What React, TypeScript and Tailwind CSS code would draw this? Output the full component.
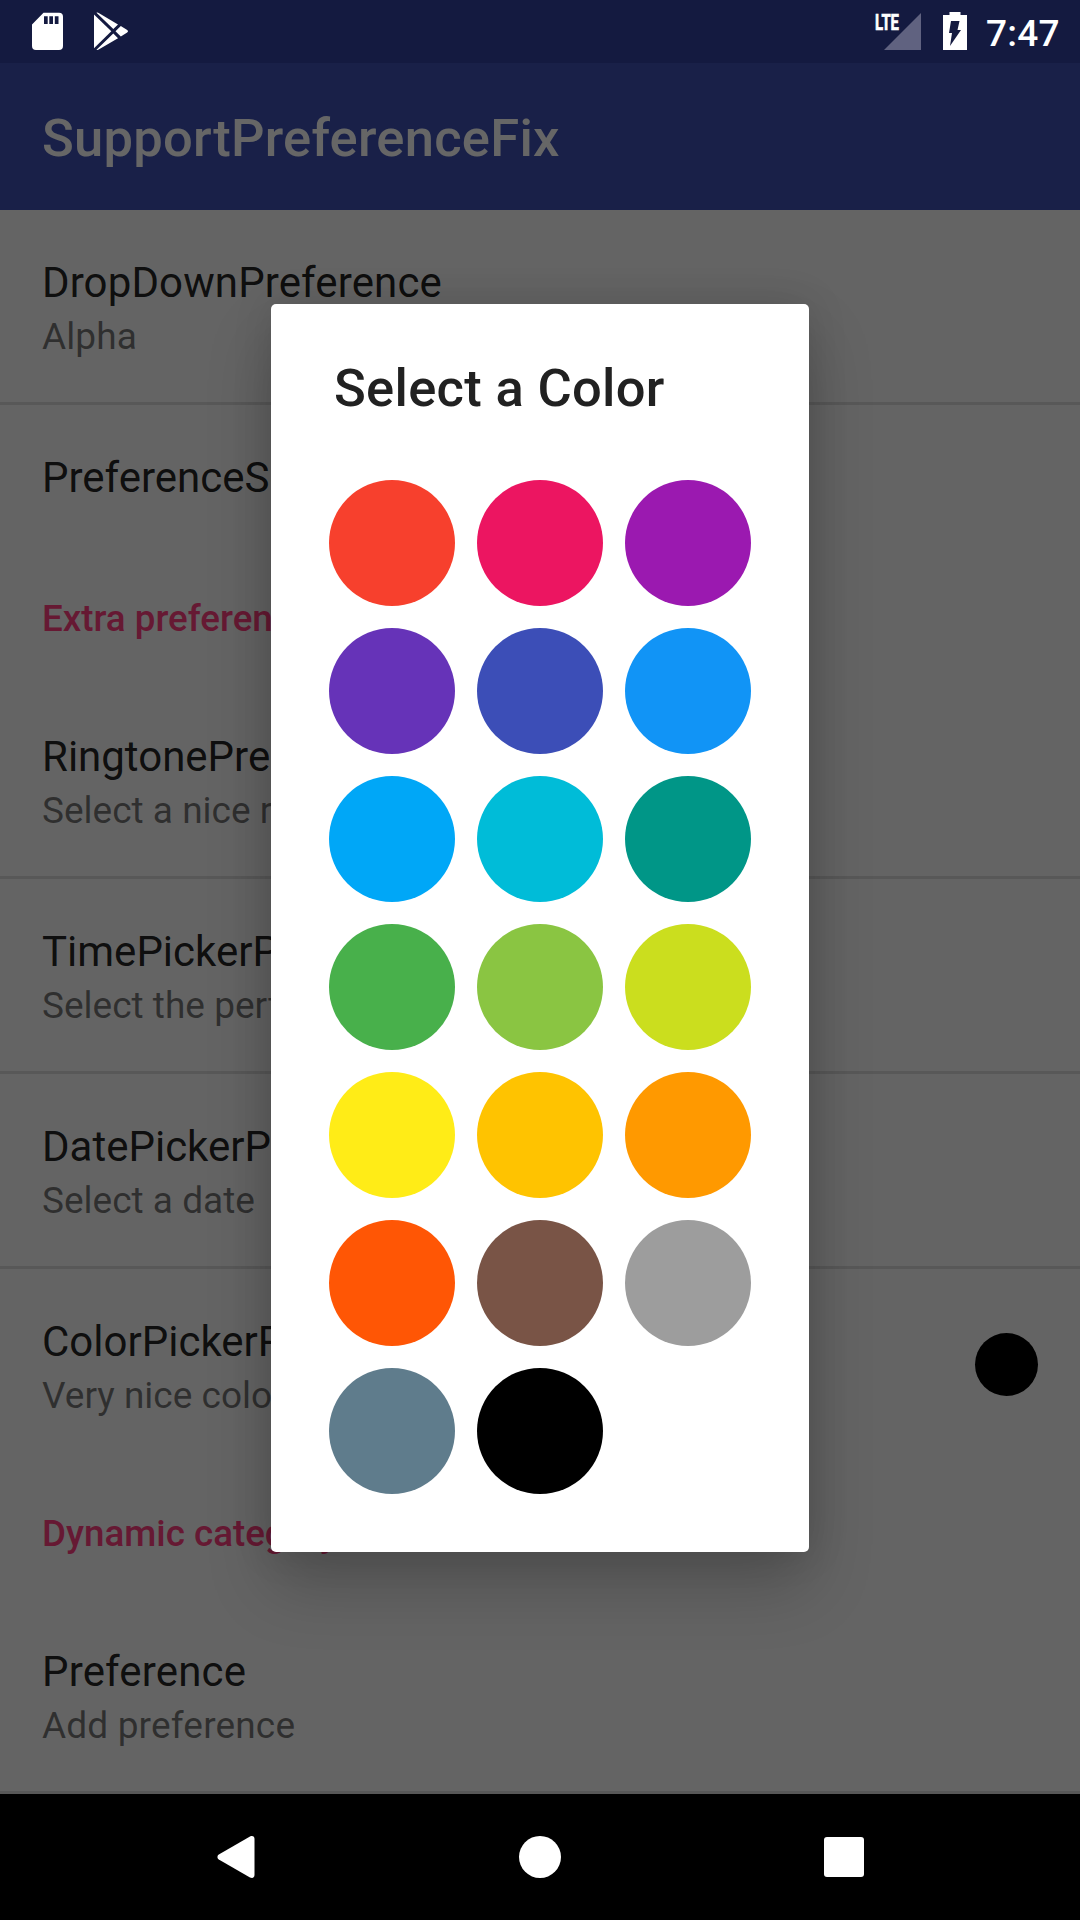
const COLORS = [
  '#f7402d', '#ec1561', '#9b19b0',
  '#6633b8', '#3c4eb7', '#1194f6',
  '#00a7f7', '#00bcd8', '#009687',
  '#48b04b', '#8ac542', '#cbde1e',
  '#ffec17', '#ffc300', '#ff9900',
  '#ff5605', '#795446', '#9d9d9d',
  '#5f7c8c', '#000000',
];

function StatusBar() {
  return (
    <header className="flex h-[63px] shrink-0 items-start bg-[#141a40] pl-8 text-white">
      <svg className="mt-3 h-[39px] w-[31px]" viewBox="0 0 31 39" fill="none">
        <path d="M11.5.7H27a4 4 0 0 1 4 4V34a4 4 0 0 1-4 4H4a4 4 0 0 1-4-4V12.500Z" fill="#fff" />
        <path d="M12 4.300h3.700v7.600H12zM17.300 4.300H21v7.600h-3.700zM22.800 4.300h3.700v7.600h-3.700z" fill="#141a40" />
      </svg>
      <svg className="mt-3 ml-[31px] h-[39px] w-[34px]" viewBox="0 0 34 39" fill="#fff">
        <path d="M0 2.500 17.300 19.300 0 36.200Z" />
        <path d="M2.500.800C3.200.300 4 .500 4.700 1L24 12.400l-4.700 4.700Z" />
        <path d="M2.500 37.800C3.200 38.300 4 38.100 4.700 37.600L24 26.200l-4.700-4.700Z" />
        <path d="m21.500 19.300 5.300-5.200 6 3.700c1.600 1 1.600 2 0 3l-6 3.700Z" />
      </svg>
      <svg className="mt-1 ml-[745px] h-[46px] w-12" viewBox="-2 -8 48 46">
        <path d="M9 38h37V1Z" fill="#606280" />
        <text x="0" y="18" fill="#fff" stroke="#fff" strokeWidth="0.7" fontFamily="Roboto" fontWeight="700" fontSize="22.500" textLength="24" lengthAdjust="spacingAndGlyphs">LTE</text>
      </svg>
      <svg className="mt-3 ml-[22px] h-[38px] w-6" viewBox="0 0 24 38">
        <path d="M6.500 0h11v3H24v35H0V3h6.500Z" fill="#fff" />
        <path d="M8 9h8.500l-2 9H18L7 34l2-13H6Z" fill="#141a40" />
      </svg>
      <span className="mt-[9px] ml-[19px] text-[37px] leading-[49px] font-medium tracking-[0.2px]">7:47</span>
    </header>
  );
}

type RowProps = { title: string; summary?: string; divider?: boolean; swatch?: boolean; className: string };

function Preference({ title, summary, divider, swatch, className }: RowProps) {
  return (
    <div className={`flex w-full shrink-0 items-start justify-between px-[42px] ${divider ? 'border-b-[3px] border-[#dcdcdc]' : ''} ${className}`}>
      <div className="pt-[45px]">
        <div className="text-[42px] leading-[56px] text-black/87">{title}</div>
        {summary && <div className="text-[37px] leading-[51px] text-black/54">{summary}</div>}
      </div>
      {swatch && <div className="mt-16 size-[63px] rounded-full bg-black" />}
    </div>
  );
}

function Category({ title }: { title: string }) {
  return (
    <div className="h-[132px] shrink-0 px-[42px] pt-[42px] text-[36.750px] leading-[49px] font-medium text-[#ff4081]">
      {title}
    </div>
  );
}

function NavigationBar() {
  return (
    <nav className="flex h-[126px] shrink-0 items-center bg-black pl-[217px]">
      <svg className="h-[42px] w-[38px]" viewBox="0 0 38 42" fill="#fff">
        <path d="M1.800 18.500 33 .600C35.500-.600 37.500.500 37.500 3v36c0 2.500-2 3.600-4.500 2.400L1.800 23.500C0 22.300 0 19.700 1.800 18.500Z" />
      </svg>
      <div className="ml-[264px] size-[42px] rounded-full bg-white" />
      <div className="ml-[263px] size-10 rounded-[3px] bg-white" />
    </nav>
  );
}

function ColorDialog() {
  return (
    <section className="h-[1248px] w-[538px] rounded-[5px] bg-white shadow-[0_34px_66px_rgba(0,0,0,0.2),0_0_40px_rgba(0,0,0,0.12)]">
      <h2 className="px-[63px] pt-[52px] text-[52.500px] leading-[65px] font-medium tracking-[0.3px] text-[#212121]">Select a Color</h2>
      <div className="mt-[59px] ml-[58px] grid w-[422px] grid-cols-3 gap-[22px]">
        {COLORS.map((color) => (
          <button key={color} aria-label={color} className="size-[126px] rounded-full" style={{ backgroundColor: color }} />
        ))}
      </div>
    </section>
  );
}

export default function App() {
  return (
    <div className="flex h-[1920px] w-[1080px] flex-col overflow-hidden font-['Roboto',sans-serif]">
      <StatusBar />
      <main className="relative flex h-[1731px] shrink-0 flex-col bg-[#fafafa]">
        <div className="flex h-[147px] shrink-0 items-center bg-[#3f51b5] px-[42px] pt-1 text-[52.500px] font-medium tracking-[0.26px] text-white">
          SupportPreferenceFix
        </div>
        <Preference title="DropDownPreference" summary="Alpha" divider className="h-[195px] tracking-[0.12px]" />
        <Preference title="PreferenceScreen" className="h-[147px]" />
        <Category title="Extra preferences" />
        <Preference title="RingtonePreference" summary="Select a nice ringtone" divider className="h-[195px]" />
        <Preference title="TimePickerPreference" summary="Select the perfect time" divider className="h-[195px]" />
        <Preference title="DatePickerPreference" summary="Select a date" divider className="h-[195px]" />
        <Preference title="ColorPickerPreference" summary="Very nice colors" swatch className="h-[198px]" />
        <Category title="Dynamic category" />
        <Preference title="Preference" summary="Add preference" divider className="h-[195px] tracking-[0.16px]" />
        <div className="absolute inset-x-0 top-0 flex h-[1731px] justify-center bg-black/60 pt-[241px]">
          <ColorDialog />
        </div>
      </main>
      <NavigationBar />
    </div>
  );
}
